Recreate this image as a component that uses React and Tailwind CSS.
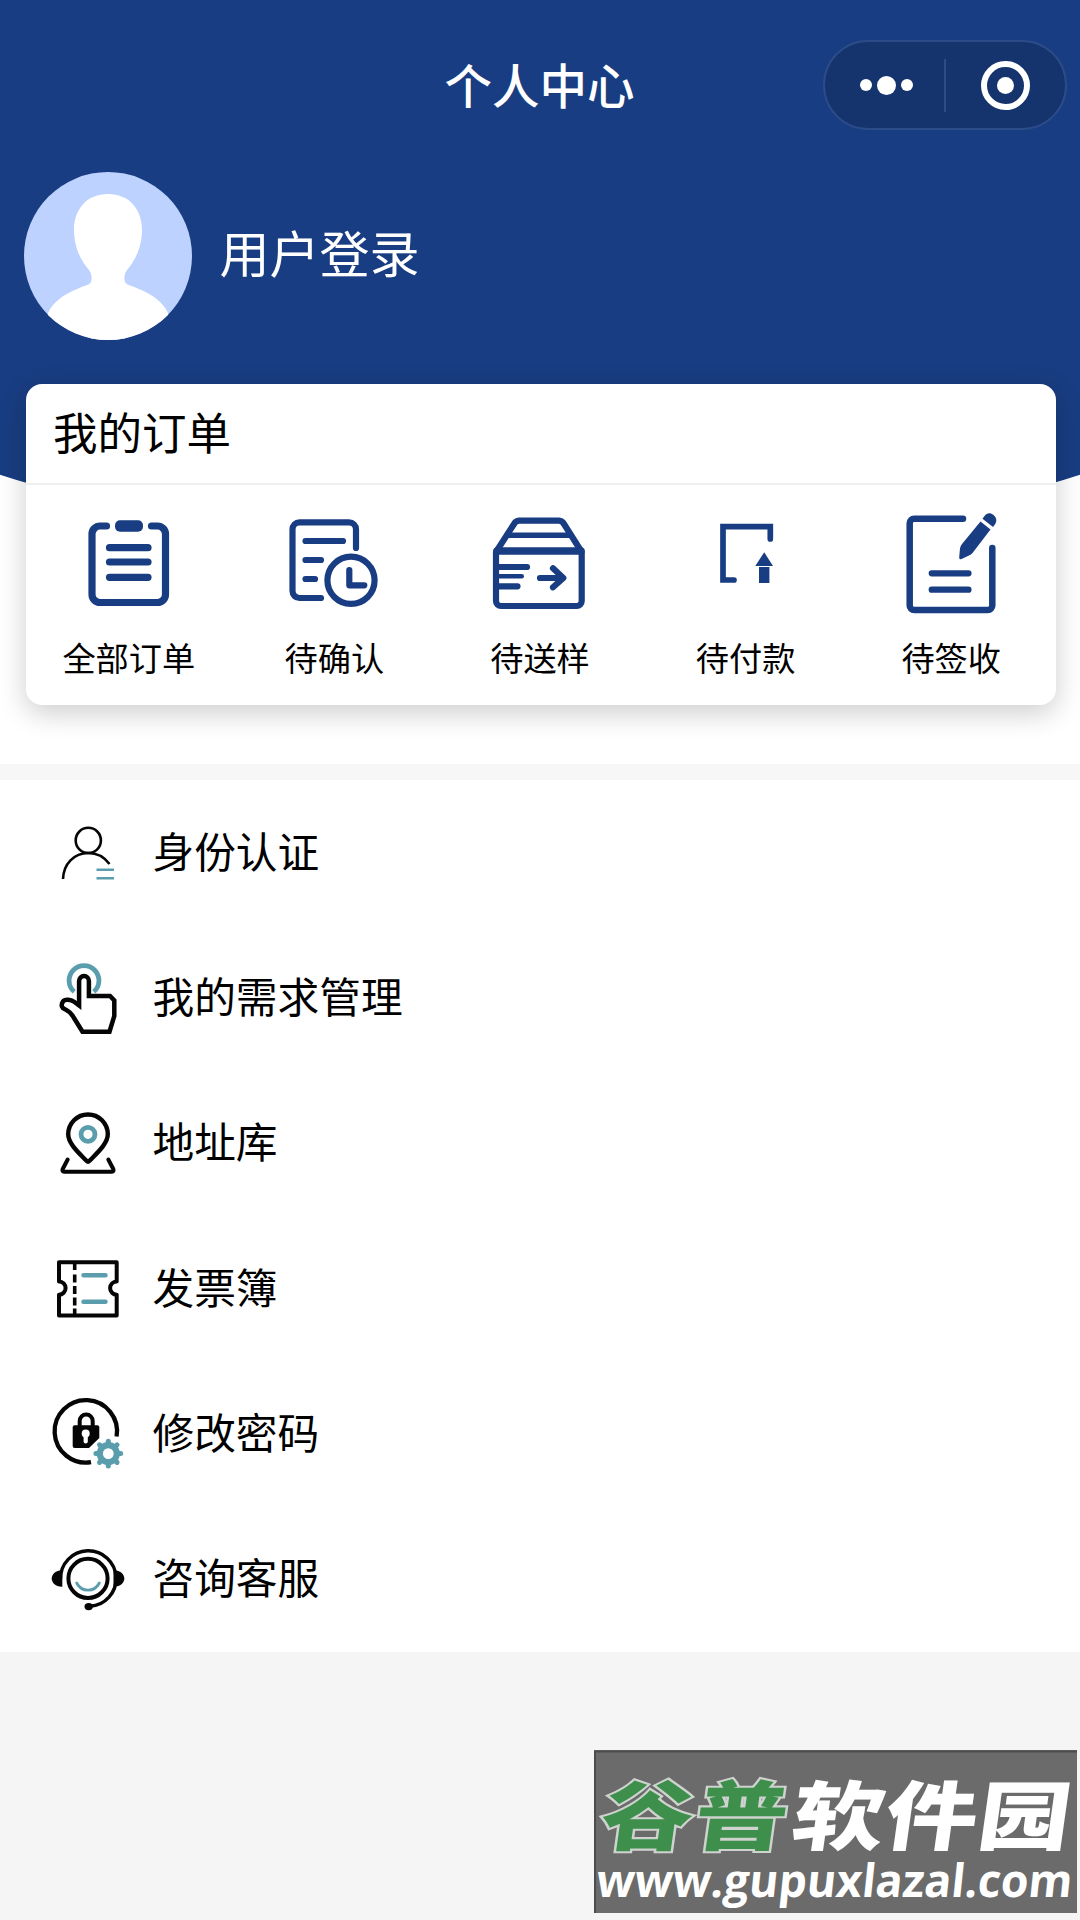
import React from 'react';

const BLUE = '#193d82';
const TEAL = '#5a9ead';

/**
 * Order status icons (100x104 grid)
 */
function OrderIcon({ children }) {
  return (
    <svg
      className="h-[104px] w-[100px]"
      viewBox="0 0 100 104"
      fill="none"
      stroke={BLUE}
      strokeWidth={6.2}
      strokeLinecap="round"
      strokeLinejoin="round"
    >
      {children}
    </svg>
  );
}

function AllOrdersIcon() {
  return (
    <OrderIcon>
      <path
        strokeWidth={7.2}
        d="M26.5 16H20a8 8 0 0 0-8 8v60.500a8 8 0 0 0 8 8h57.500a8 8 0 0 0 8-8V24a8 8 0 0 0-8-8H71.500"
      />
      <rect x="35" y="10.300" width="28" height="11.500" rx="5" fill={BLUE} stroke="none" />
      <path strokeWidth={7.2} d="M29.500 37.700h38.500M29.500 52h38.500M29.500 67.300h38.500" />
    </OrderIcon>
  );
}

function ConfirmIcon() {
  return (
    <OrderIcon>
      <path d="M36 88H14.500a7 7 0 0 1-7-7V19.300a7 7 0 0 1 7-7H64a7 7 0 0 1 7 7V38" />
      <path d="M20.500 31H58M20.500 50H36M20.500 69h9.500" />
      <circle cx="66" cy="70.300" r="23.600" />
      <path d="M64.300 60v15.300h15" />
    </OrderIcon>
  );
}

function SampleIcon() {
  return (
    <OrderIcon>
      <path d="M5 42v49a5 5 0 0 0 5 5h75.700a5 5 0 0 0 5-5V42L73 14a6 6 0 0 0-5-3.300H28A6 6 0 0 0 23 14z" />
      <path strokeWidth={5.5} d="M16 25.300h62" />
      <path strokeWidth={7.5} d="M6 41h84" />
      <path d="M6 57h30M6 76.300h20.500" />
      <path strokeWidth={4.6} d="M6 66.300h24.700" />
      <path d="M49 68h23M62 58.300L72.300 68 62 77.300" />
    </OrderIcon>
  );
}

function PaymentIcon() {
  return (
    <OrderIcon>
      <path strokeWidth={5.7} strokeLinejoin="miter" d="M37 70H26V16.700h47.300V29" />
      <path fill={BLUE} stroke="none" d="M58.300 56L67.200 42.300 76 56zM62 57h10.400v16H62z" />
    </OrderIcon>
  );
}

function SignIcon() {
  return (
    <OrderIcon>
      <path
        strokeWidth={6.5}
        d="M61 8.700H12.200a4.500 4.500 0 0 0-4.500 4.500v82.300a4.500 4.500 0 0 0 4.500 4.500h73.600a4.500 4.500 0 0 0 4.500-4.500V38"
      />
      <path d="M29.700 63.300h36.800M29.700 79.700h36.800" />
      <path
        fill={BLUE}
        stroke="none"
        d="M78.500 11.500L88.500 19.500 70.500 43Q69 44.500 67 45.500L59.500 49Q57 50 57.200 47L58 38.500Q58.300 36 60 34z"
      />
      <path fill={BLUE} stroke="none" d="M80.500 8.800L82.500 6C85 2.500 88.500 2.500 91.500 5 94.500 7.500 95.200 11 93 14.200L91 17z" />
    </OrderIcon>
  );
}

/**
 * Menu icons (72x72 grid), black with a teal accent
 */
function MenuIcon({ children }) {
  return (
    <svg
      className="h-[72px] w-[72px] shrink-0 overflow-visible"
      viewBox="0 0 72 72"
      fill="none"
      stroke="#050505"
      strokeWidth={4}
      strokeLinecap="round"
      strokeLinejoin="round"
    >
      {children}
    </svg>
  );
}

function IdentityIcon() {
  return (
    <MenuIcon>
      <g strokeWidth={2.6} strokeLinecap="butt">
        <circle cx="37.300" cy="23.400" r="12.600" />
        <path d="M12 62C12.500 47 23 36 37.300 36c8.500 0 16 4 21.200 11" />
        <path stroke={TEAL} d="M45.500 52.700h17.500M45.500 61.300h17.500" />
      </g>
    </MenuIcon>
  );
}

function DemandIcon() {
  return (
    <MenuIcon>
      <path stroke={TEAL} strokeWidth={4.8} strokeLinecap="butt" d="M23.200 29.800a14.900 14.900 0 1 1 19.600 0" />
      <path
        strokeWidth={4.5}
        strokeLinejoin="miter"
        fill="#fff"
        d="M37.900 34V19a4.900 4.900 0 0 0-9.800 0v24.500l-5-3.700C20 37.500 14 36.500 12 39.500c-2.500 4-1 6.500 2 7.800 5 2.200 7 5 9 8.700l8.500 13.700H58.500l4.800-15.700V38.500L59 34z"
      />
    </MenuIcon>
  );
}

function AddressIcon() {
  return (
    <MenuIcon>
      <path
        strokeWidth={4.4}
        d="M38.500 53.800c7-7.300 18.300-17 18.300-26.500a19.800 19.800 0 0 0-39.600 0c0 9.500 11.300 19.200 18.300 26.500q1.500 1.500 3 0z"
      />
      <circle cx="37" cy="27.300" r="7" stroke={TEAL} strokeWidth={4.8} />
      <path d="M16.700 52.500L11.700 62q-1 2.700 1.500 2.700h47.600q2.500 0 1.500-2.700L57.300 52.500" />
    </MenuIcon>
  );
}

function InvoiceIcon() {
  return (
    <MenuIcon>
      <path d="M8 10.300H65.700V29.500a6.600 6.600 0 0 0 0 13.200V63.500H8V42.700a6.600 6.600 0 0 0 0-13.200z" />
      <path strokeWidth={3.6} strokeLinecap="butt" d="M23.700 12v6M23.700 22.500v8M23.700 34v8M23.700 45.500v8M23.700 56.500v7" />
      <path stroke={TEAL} strokeWidth={4.5} d="M32.500 23.300h22M32.500 49.700h22" />
    </MenuIcon>
  );
}

function PasswordIcon() {
  return (
    <MenuIcon>
      <path strokeWidth={4.3} strokeLinecap="butt" d="M65.600 39.500A31.200 31.200 0 1 0 40 65.100" />
      <path d="M28.700 30v-6a6.500 6.500 0 0 1 13 0v6" />
      <path
        fill="#050505"
        stroke="none"
        d="M23.700 28.300h22.600a2 2 0 0 1 2 2V41L38 51H23.700a2 2 0 0 1-2-2V30.300a2 2 0 0 1 2-2z"
      />
      <circle cx="34.700" cy="36.500" r="4" fill="#fff" stroke="none" />
      <path stroke="#fff" strokeWidth={4.2} d="M34.700 38v6.500" />
      <g stroke={TEAL}>
        <circle cx="57.300" cy="56.600" r="8.500" strokeWidth={6.2} />
        {[0, 45, 90, 135, 180, 225, 270, 315].map((angle) => (
          <path
            key={angle}
            strokeWidth={5}
            d="M57.300 46v-1.800"
            transform={`rotate(${angle} 57.300 56.600)`}
          />
        ))}
      </g>
    </MenuIcon>
  );
}

function ServiceIcon() {
  return (
    <MenuIcon>
      <circle cx="37" cy="35.400" r="19.600" />
      <path strokeWidth={3.4} d="M9.500 36A27.800 27.800 0 1 1 39 63.300" />
      <g fill="#050505" stroke="none">
        <path d="M11.300 27.200v16.500C5 44 .700 40 .700 35.500S5 27 11.300 27.200z" />
        <path d="M62.500 27.200v16.500C69 44 73.300 40 73.300 35.500S69 27 62.500 27.200z" />
        <ellipse cx="37.700" cy="63.600" rx="4.200" ry="3.600" />
      </g>
      <path stroke={TEAL} strokeWidth={2.8} d="M25.700 40c5 9.600 17.600 9.600 22.600 0" />
    </MenuIcon>
  );
}

const orders = [
  { label: '全部订单', icon: AllOrdersIcon },
  { label: '待确认', icon: ConfirmIcon },
  { label: '待送样', icon: SampleIcon },
  { label: '待付款', icon: PaymentIcon },
  { label: '待签收', icon: SignIcon },
];

const menu = [
  { label: '身份认证', icon: IdentityIcon },
  { label: '我的需求管理', icon: DemandIcon },
  { label: '地址库', icon: AddressIcon },
  { label: '发票簿', icon: InvoiceIcon },
  { label: '修改密码', icon: PasswordIcon },
  { label: '咨询客服', icon: ServiceIcon },
];

function TopBar() {
  return (
    <div className="grid h-[172px] grid-cols-[1fr_auto_1fr] items-start pt-[40px] pr-[13px] pl-[12px]">
      <div />
      <h1 className="text-[47.500px] leading-[88px] font-medium text-white">个人中心</h1>
      <div className="flex h-[90px] w-[244px] items-center justify-self-end rounded-full border-2 border-[#2b4c89] bg-[#15336d]">
        <div className="flex w-[119px] items-center justify-center gap-[5px] pl-[4px]">
          <span className="h-3 w-3 rounded-full bg-white" />
          <span className="h-[19px] w-[19px] rounded-full bg-white" />
          <span className="h-3 w-3 rounded-full bg-white" />
        </div>
        <div className="h-[53px] w-[2px] bg-[#2b4c89]" />
        <div className="flex flex-1 justify-center">
          <div className="flex h-[49px] w-[49px] items-center justify-center rounded-full border-[6px] border-white">
            <span className="h-[17px] w-[17px] rounded-full bg-white" />
          </div>
        </div>
      </div>
    </div>
  );
}

function Profile() {
  return (
    <div className="flex h-[168px] items-center gap-[28px] pl-[23.500px]">
      <svg className="h-[168px] w-[168px] rounded-full bg-[#bdd2fe]" viewBox="0 0 168 168">
        <path
          fill="#fff"
          d="M84 22c21 0 34 15 34 36 0 17-7 31-15 40-3 4-3 8-2 12 1 3 8 4 14 7 14 6 24 13 29 24v27H24v-27c5-11 15-18 29-24 6-3 13-4 14-7 1-4 1-8-2-12-8-9-15-23-15-40 0-21 13-36 34-36z"
        />
      </svg>
      <span className="pb-[10px] text-[50px] leading-none text-white">用户登录</span>
    </div>
  );
}

function OrderCard() {
  return (
    <section className="mt-[44px] ml-[26px] h-[321px] w-[1030px] rounded-[16px] bg-white shadow-[0_8px_28px_rgba(0,0,0,0.2)]">
      <h2 className="h-[101px] border-b-2 border-[#f0f0f0] pl-[27px] text-[44.500px] leading-[94px] text-black">
        我的订单
      </h2>
      <div className="grid grid-cols-5 pt-[25px] pr-[2px]">
        {orders.map(({ label, icon: Icon }) => (
          <div key={label} className="flex flex-col items-center">
            <div className="pl-[2px]">
              <Icon />
            </div>
            <span className="mt-[20px] text-[33.200px] leading-[46px] text-black">{label}</span>
          </div>
        ))}
      </div>
    </section>
  );
}

function SiteLogo() {
  return (
    <svg className="h-[163px] w-[483px] overflow-visible bg-[#6b6b6b]" viewBox="0 0 483 163">
      <path d="M1 163V1.500H483" fill="none" stroke="#4c4c4c" strokeWidth="2" />
      <g
        transform="translate(0 94) skewX(-8) scale(1 0.82)"
        fontFamily='"Noto Sans CJK SC", sans-serif'
        fontWeight="900"
        fontSize="92"
      >
        <text x="4" y="0" textLength="186" fill="#3d8f4b" stroke="#cfd3cf" strokeWidth="5" paintOrder="stroke">
          谷普
        </text>
        <text x="195" y="0" textLength="278" fill="#fff">
          软件园
        </text>
      </g>
      <text
        transform="translate(1 147) skewX(-6)"
        textLength="476"
        lengthAdjust="spacingAndGlyphs"
        fontFamily='"Open Sans", sans-serif'
        fontWeight="700"
        fontSize="46"
        fill="#fff"
      >
        www.gupuxlazal.com
      </text>
    </svg>
  );
}

export default function App() {
  return (
    <div className="flex h-[1920px] w-[1080px] flex-col overflow-hidden bg-[#f5f5f5] font-['Noto_Sans_CJK_SC',sans-serif]">
      <header className="relative isolate h-[764px] overflow-hidden bg-white">
        {/* curved backdrop, its arc mostly sits behind the card */}
        <div className="absolute top-0 -left-[110px] -z-10 h-[539px] w-[1300px] bg-[#193d82] [border-bottom-left-radius:650px_145px] [border-bottom-right-radius:650px_145px]" />
        <TopBar />
        <Profile />
        <OrderCard />
      </header>

      <nav className="h-[888px] border-t-[16px] border-[#f7f7f7] bg-white">
        {menu.map(({ label, icon: Icon }) => (
          <div key={label} className="flex h-[145.200px] items-center gap-[30px] pl-[50.500px]">
            <Icon />
            <span className="pb-[5px] text-[41.700px] leading-[60px] text-black">{label}</span>
          </div>
        ))}
      </nav>

      <footer className="flex flex-1 items-end justify-end pr-[3px] pb-[7px]">
        <SiteLogo />
      </footer>
    </div>
  );
}
